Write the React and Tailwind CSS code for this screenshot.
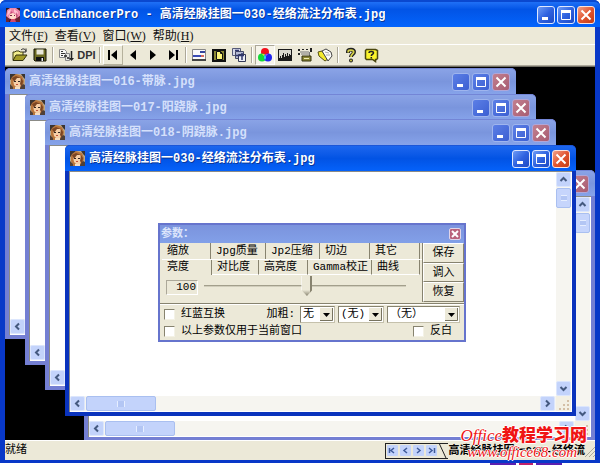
import { useState } from 'react';
import clsx from 'clsx';

const documents = [
  { title: '', place: 'left-[79px] top-[103px]' },
  { title: '高清经脉挂图一016-带脉.jpg', place: 'left-0 top-px' },
  { title: '高清经脉挂图一017-阳跷脉.jpg', place: 'left-[20px] top-[27px]' },
  { title: '高清经脉挂图一018-阴跷脉.jpg', place: 'left-[40px] top-[52px]' },
  { title: '高清经脉挂图一030-经络流注分布表.jpg', place: 'left-[60px] top-[78px]', active: true },
];

const menus = [
  ['文件', 'F'],
  ['查看', 'V'],
  ['窗口', 'W'],
  ['帮助', 'H'],
];

const upperTabs = [
  ['缩放', 'w-[49px]'],
  ['Jpg质量', 'w-[55px]'],
  ['Jp2压缩', 'w-[54px]'],
  ['切边', 'w-[50px]'],
  ['其它', 'w-[50px]'],
];

const lowerTabs = [
  ['亮度', 'w-[50px]'],
  ['对比度', 'w-[47px]'],
  ['高亮度', 'w-[49px]'],
  ['Gamma校正', 'w-[64px]'],
  ['曲线', 'w-[48px]'],
];

const arrowTurn = { up: '', right: 'rotate-90', down: 'rotate-180', left: '-rotate-90' };

function AppIcon() {
  return (
    <svg viewBox="0 0 14 14" className="h-3.5 w-3.5 shrink-0" aria-hidden="true">
      <rect width="14" height="14" fill="#2b1524" />
      <path d="M1 2l3-2h6l4 3v5l-3 3H3L0 8z" fill="#ee86a8" />
      <path d="M2 3l3-2-1 4-3 3zM8 1l4 3-1 3-3-3z" fill="#ffc0d0" />
      <path d="M5 3l2 2-3 2zM10 4l2 4-2 2z" fill="#c65079" />
      <path d="M4 6l3-1 3 2v3l-2 1H5L3 9z" fill="#ffdccb" />
      <path d="M4 7h2v1H4zM8 7h1v1H8z" fill="#7a1f45" />
      <path d="M0 9l4 2-1 3H0zM9 11l5-3v6H9z" fill="#6a2433" />
      <path d="M5 11h4l1 3H4z" fill="#d4486b" />
    </svg>
  );
}

function PortraitIcon() {
  return (
    <svg viewBox="0 0 15 15" className="h-[15px] w-[15px] shrink-0" aria-hidden="true">
      <rect width="15" height="15" fill="#b9a98c" />
      <path d="M0 0h6L3 4 0 6zM11 0h4v5l-2-2z" fill="#3a3431" />
      <path d="M2 3l4-3 6 2 2 5-1 5-3 3H3L1 10V5z" fill="#b9763c" />
      <path d="M3 6l3-3 4 1 2 4-2 5-3 1-3-3z" fill="#f6cfa6" />
      <path d="M2 4l4-2 5 2-4 0-3 4zM11 4l2 3-1 6-2-3z" fill="#7b4623" />
      <path d="M4 7h2v1H4zM8 7h2v1H8z" fill="#33251f" />
      <path d="M6 10h2v1H6z" fill="#c0523b" />
      <path d="M0 10l3 3v2H0zM10 14l3-4 2 1v4h-5z" fill="#4f4038" />
      <path d="M5 13h5v2H5z" fill="#f3dcc0" />
    </svg>
  );
}

function CaptionButtons({ active }) {
  const base = 'flex h-[18px] w-[18px] items-center justify-center rounded-[3px] border';
  const blue = active
    ? 'border-[#dfe8ff] bg-linear-to-br from-[#6f9bf5] via-[#2f62e0] to-[#1d49c4]'
    : 'border-[#9fb5ee] bg-linear-to-br from-[#5c7fe6] to-[#3c5fd2]';
  const red = active
    ? 'border-[#fbe3dc] bg-linear-to-br from-[#f0a088] via-[#e1552f] to-[#c43c13]'
    : 'border-[#b0a6d8] bg-linear-to-br from-[#c2808f] to-[#a85c72]';
  return (
    <div className="ml-auto flex shrink-0 gap-[2px]">
      <button type="button" aria-label="最小化" className={clsx(base, blue)}>
        <svg viewBox="0 0 16 16" className="h-4 w-4"><path d="M4 10h6v3H4z" fill="#fff" /></svg>
      </button>
      <button type="button" aria-label="最大化" className={clsx(base, blue)}>
        <svg viewBox="0 0 16 16" className="h-4 w-4">
          <path d="M3.500 4.500h9v8h-9z" fill="none" stroke="#fff" />
          <path d="M3 3h10v3H3z" fill="#fff" />
        </svg>
      </button>
      <button type="button" aria-label="关闭" className={clsx(base, red)}>
        <svg viewBox="0 0 16 16" className="h-4 w-4">
          <path d="M3.500 3.500l9 9M12.500 3.500l-9 9" stroke="#fff" strokeWidth="2" />
        </svg>
      </button>
    </div>
  );
}

function ScrollButton({ direction }) {
  return (
    <button
      type="button"
      aria-label={direction}
      className="flex h-[15px] w-[15px] shrink-0 items-center justify-center rounded-[2px] border border-[#dce6fd] bg-[#c3d3fb]"
    >
      <svg viewBox="0 0 9 9" className={clsx('h-[9px] w-[9px]', arrowTurn[direction])}>
        <path d="M1.500 6l3-3 3 3" fill="none" stroke="#44597f" strokeWidth="2" />
      </svg>
    </button>
  );
}

function SizeGrip() {
  return (
    <svg viewBox="0 0 15 15" className="h-[15px] w-[15px] shrink-0 bg-[#f3f0e4]" aria-hidden="true">
      <path d="M11 4h2v2h-2zM11 8h2v2h-2zM11 12h2v2h-2zM7 8h2v2H7zM7 12h2v2H7zM3 12h2v2H3z" fill="#d3bfa6" />
    </svg>
  );
}

function DocumentWindow({ title, place, active }) {
  return (
    <section
      className={clsx(
        'absolute flex h-[271px] w-[511px] flex-col rounded-t-[5px] border-x-4 border-b-4',
        place,
        active ? 'border-[#0a33bd] bg-[#0a33bd]' : 'border-[#747fd3] bg-[#747fd3]',
      )}
    >
      <header
        className={clsx(
          '-mx-1 flex h-[26px] shrink-0 items-center gap-1 rounded-t-[5px] border-t pr-[6px] pl-[5px]',
          active
            ? 'border-[#1b56d8] bg-linear-to-b from-[#1c66ee] via-[#0253e4] to-[#0562fa]'
            : 'border-[#7385d6] bg-linear-to-b from-[#8aa3e6] via-[#7a95dd] to-[#86a3ea]',
        )}
      >
        <PortraitIcon />
        <h2
          className={clsx(
            'truncate text-[12px] leading-4 font-bold',
            active ? 'text-white [text-shadow:1px_1px_#0a3698]' : 'text-[#d5e0fb]',
          )}
        >
          {title}
        </h2>
        <CaptionButtons active={active} />
      </header>
      <div className="flex min-h-0 flex-1 flex-col border-t border-l border-[#8b8b86] bg-white pr-px pb-px">
        <div className="flex min-h-0 flex-1">
          <div className="flex-1" />
          <div className="flex w-[15px] flex-col gap-px bg-[#f6f5f0]">
            <ScrollButton direction="up" />
            <div className="flex h-5 items-center justify-center rounded-[2px] border border-[#a9bff0] bg-[#c6d5fc]">
              <div className="h-1.5 w-1.5 border-y border-[#e6eeff] bg-[#b3c6f4]" />
            </div>
            <div className="flex-1" />
            <ScrollButton direction="down" />
          </div>
        </div>
        <div className="flex h-[15px] shrink-0 gap-px bg-[#f6f5f0]">
          <ScrollButton direction="left" />
          <div className="flex w-[70px] items-center justify-center rounded-[2px] border border-[#a9bff0] bg-[#c3d3fb]">
            <div className="h-1.5 w-2 border-x border-[#e6eeff] bg-[#b3c6f4]" />
          </div>
          <div className="flex-1" />
          <ScrollButton direction="right" />
          <SizeGrip />
        </div>
      </div>
    </section>
  );
}

function ToolButton({ label, raised, pressed, wide, children }) {
  return (
    <button
      type="button"
      aria-label={label}
      className={clsx(
        'flex h-5 items-center justify-center border',
        wide ? 'w-[21px]' : 'w-5',
        raised && 'border-t-white border-r-[#b5b19c] border-b-[#b5b19c] border-l-white',
        pressed && 'border-t-[#aca899] border-r-white border-b-white border-l-[#aca899] bg-[#f6f4ea]',
        !raised && !pressed && 'border-transparent',
      )}
    >
      {children}
    </button>
  );
}

function Glyph({ children }) {
  return (
    <svg viewBox="0 0 16 16" className="h-4 w-4 shrink-0" aria-hidden="true">
      {children}
    </svg>
  );
}

function Divider() {
  return <div className="mx-[2px] h-4 w-[2px] border-r border-l border-r-white border-l-[#aca899]" />;
}

function Toolbar() {
  return (
    <div role="toolbar" className="flex h-[22px] items-center border-t border-b border-t-white border-b-[#aca899] pl-[5px]">
      <ToolButton label="打开">
        <Glyph>
          <path d="M1 13V5h2l1-1h3l1 1h3v3" fill="#f3ee8d" stroke="#3c3a10" />
          <path d="M1 13.500l3-5.500h11l-4 5.500z" fill="#a39c28" stroke="#33310c" />
          <path d="M9 3c2-2 4-1 5 1M14 1.500V5h-3" fill="none" stroke="#222" />
        </Glyph>
      </ToolButton>
      <ToolButton label="保存文件">
        <Glyph>
          <path d="M2 2h12v12H3l-1-1z" fill="#6d6b22" stroke="#151505" />
          <path d="M4.500 2.500h7v5h-7z" fill="#e9e7da" />
          <path d="M4 10h8v4H4z" fill="#111" />
          <path d="M9.500 11h1.500v3H9.500z" fill="#eee" />
        </Glyph>
      </ToolButton>
      <Divider />
      <ToolButton label="批处理">
        <Glyph>
          <path d="M1.500 2.500h5l2 2v6h-7z" fill="#f8f8f5" stroke="#888" />
          <path d="M3 4.500h2M3 6.500h4M3 8.500h2" stroke="#333" />
          <path d="M7.500 6.500h4v7h-4z" fill="#e7e7e2" stroke="#888" />
          <path d="M13.500 4v9M6 9h3M9 11h2" fill="none" stroke="#222" strokeWidth="1.500" />
          <path d="M11 11h5l-2.500 3z" fill="#222" />
        </Glyph>
      </ToolButton>
      <ToolButton label="DPI" wide>
        <span className="font-['Liberation_Sans'] text-[11px] leading-none font-bold text-[#333]">DPI</span>
      </ToolButton>
      <Divider />
      <ToolButton label="第一页" raised>
        <Glyph><path d="M3 3h2v10H3zM12 3v10L6 8z" /></Glyph>
      </ToolButton>
      <ToolButton label="上一页">
        <Glyph><path d="M11 3v10L5 8z" /></Glyph>
      </ToolButton>
      <ToolButton label="下一页">
        <Glyph><path d="M5 3v10l6-5z" /></Glyph>
      </ToolButton>
      <ToolButton label="最后一页">
        <Glyph><path d="M4 3v10l6-5zM11 3h2v10h-2z" /></Glyph>
      </ToolButton>
      <Divider />
      <ToolButton label="参数窗口">
        <Glyph>
          <path d="M1.500 2.500h13v11h-13z" fill="#fafafa" stroke="#888" />
          <path d="M1 12h14v2H1zM13.500 3v10" fill="#444" />
          <path d="M9 4h5v2H9z" fill="#34449c" />
          <path d="M2 8h8v2H2z" fill="#3a4cb4" />
          <path d="M10 8h3v2h-3z" fill="#d66a5b" />
        </Glyph>
      </ToolButton>
      <ToolButton label="整页">
        <Glyph>
          <path d="M2 3h12v11H2z" fill="#8c8934" stroke="#111" strokeWidth="2" />
          <path d="M5.500 4.500h4l2 2v6h-6z" fill="#fdf67a" stroke="#111" />
          <path d="M9.500 4.500v2h2" fill="none" stroke="#111" />
        </Glyph>
      </ToolButton>
      <ToolButton label="层叠">
        <Glyph>
          <path d="M1.500 1.500h8v7h-8z" fill="#d6d9e8" stroke="#555a78" />
          <path d="M4.500 4.500h8v7h-8z" fill="#b3b8d2" stroke="#444966" />
          <path d="M7.500 7.500h7v7h-7z" fill="#eceef6" stroke="#333855" />
          <path d="M11 6v7M5 8.500h8M4 3.500h4" stroke="#2f376e" strokeWidth="1.500" />
        </Glyph>
      </ToolButton>
      <Divider />
      <ToolButton label="彩色" pressed>
        <Glyph>
          <circle cx="8" cy="5" r="4" fill="#f3101c" />
          <circle cx="5" cy="10.500" r="4" fill="#14d838" />
          <circle cx="11" cy="10.500" r="4" fill="#2025ee" />
          <path d="M8 7.500c1.300 1.500 1.300 4 0 5.500-1.300-1.500-1.300-4 0-5.500z" fill="#35e3ee" />
          <path d="M5 7l3 0.500-1.500 1.200z" fill="#ffe93a" />
          <path d="M11 7l-3 0.500 1.500 1.200z" fill="#f43bdc" />
        </Glyph>
      </ToolButton>
      <ToolButton label="直方图">
        <Glyph>
          <path d="M1 2h14v12H1z" fill="#1b1b1b" />
          <path d="M2 3h12v5h-1V7h-1v2h-1V6h-1v3H9V7H8v3H7V6H6v2H5v3H4V9H3v2H2z" fill="#d9d8cf" />
        </Glyph>
      </ToolButton>
      <ToolButton label="裁剪">
        <Glyph>
          <path d="M1 2h2v2H1zM5 2h2v1H5zM9 2h2v1H9zM13 1h2v4h-2zM1 6h2v2H1z" fill="#222" />
          <path d="M3 5h9M4 7h8M12.500 5v4" stroke="#777" />
          <path d="M5 9h9v5H5z" fill="#8a8734" stroke="#33310f" />
          <path d="M7 11.500h5" stroke="#f0edb0" />
        </Glyph>
      </ToolButton>
      <ToolButton label="擦除">
        <Glyph>
          <path d="M1 5l4-1 6 8-3 2-6-5z" fill="#f3ea2f" stroke="#55500f" />
          <path d="M5 4l4-2 5 3 1 4-4 5z" fill="#fdfdfa" stroke="#444" />
          <path d="M8 5l4 1M9 8l4 0" stroke="#aaa" />
        </Glyph>
      </ToolButton>
      <Divider />
      <ToolButton label="关于">
        <Glyph>
          <path d="M5 6V4.500C5 2 11 2 11 5c0 2.500-3 2-3 5" fill="none" stroke="#222" strokeWidth="4" />
          <path d="M5.200 5.500V4.500c0-2 5.500-2 5.500 0.500 0 2-2.700 2-2.700 5" fill="none" stroke="#d5d048" strokeWidth="1.800" />
          <circle cx="8" cy="13.500" r="2" fill="#222" />
          <circle cx="8" cy="13.500" r="0.900" fill="#dcd84a" />
        </Glyph>
      </ToolButton>
      <ToolButton label="帮助主题">
        <Glyph>
          <path d="M3.500 2.500h9l2 1v8l-1 1h-1v2l-3-2h-6l-1-1v-8z" fill="#fbf52b" stroke="#4a470f" strokeWidth="1.500" />
          <path d="M6 6c0-2 4.500-2 4.500 0C10.500 7.500 8.300 7 8.300 9M8.300 10v1.500" fill="none" stroke="#222" strokeWidth="1.500" />
        </Glyph>
      </ToolButton>
    </div>
  );
}

function TabRow({ tabs, selected, onSelect, ledge }) {
  return (
    <div className={clsx('flex h-4', ledge && 'border-t border-white')}>
      {tabs.map(([name, width]) => (
        <button
          key={name}
          type="button"
          role="tab"
          aria-selected={selected === name}
          onClick={() => onSelect(name)}
          className={clsx(
            'border-r border-[#87836f] pl-[5px] text-left leading-[15px] whitespace-nowrap',
            width,
            selected !== name && ledge && 'border-b border-b-white',
          )}
        >
          {name}
        </button>
      ))}
    </div>
  );
}

function Check({ label }) {
  return (
    <label className="flex items-center gap-[6px] whitespace-nowrap">
      <input
        type="checkbox"
        className="h-[11px] w-[11px] appearance-none border border-t-[#87836f] border-r-[#f4f2e6] border-b-[#f4f2e6] border-l-[#87836f] bg-white checked:bg-[#333]"
      />
      {label}
    </label>
  );
}

function Picker({ label, value, width }) {
  return (
    <div className={clsx('relative border border-t-[#87836f] border-r-[#c5c1ac] border-b-[#c5c1ac] border-l-[#87836f] bg-white', width)}>
      <select aria-label={label} defaultValue={value} className="block h-[15px] w-full appearance-none pl-[2px] leading-[15px] outline-none">
        <option>{value}</option>
      </select>
      <svg viewBox="0 0 13 13" className="pointer-events-none absolute top-px right-px h-[13px] w-[13px] bg-[#ece9d8]" aria-hidden="true">
        <path d="M12.500 0v12.500H0" fill="none" stroke="#77735f" />
        <path d="M3 5h7L6.500 9z" />
      </svg>
    </div>
  );
}

function ParameterPanel() {
  const [tab, setTab] = useState('亮度');
  const [level, setLevel] = useState(100);

  return (
    <section className="absolute top-[156px] left-[153px] w-[308px] border-2 border-[#6674cd] bg-[#ece9d8] text-[11px] text-black">
      <header className="flex h-[18px] items-center bg-linear-to-b from-[#7b93dd] to-[#82a0e8] pr-[3px] pl-px">
        <h2 className="font-bold text-[#dbe4fb]">参数：</h2>
        <button type="button" aria-label="关闭参数" className="ml-auto flex h-3 w-3 items-center justify-center rounded-[2px] border border-[#e0d5ea] bg-[#b9637c]">
          <svg viewBox="0 0 8 8" className="h-2 w-2"><path d="M1 1l6 6M7 1L1 7" stroke="#fff" strokeWidth="2" /></svg>
        </button>
      </header>
      <div className="flex border-b border-[#87836f] pb-px">
        <div className="flex-1 border-r border-[#87836f] pl-[2px]">
          <TabRow tabs={upperTabs} selected={tab} onSelect={setTab} />
          <TabRow tabs={lowerTabs} selected={tab} onSelect={setTab} ledge />
          <div className="flex h-[27px] items-start gap-[6px] pl-1">
            <output className="mt-[5px] w-8 border border-t-[#aca899] border-r-white border-b-white border-l-[#aca899] pr-px text-right leading-[13px]">{level}</output>
            <input
              type="range"
              aria-label="亮度"
              min="0"
              max="196"
              value={level}
              onChange={(e) => setLevel(Number(e.target.value))}
              className="h-[22px] w-[202px] appearance-none bg-transparent bg-linear-to-b from-transparent from-45% via-[#87836f] via-45% to-transparent to-55% [&::-webkit-slider-thumb]:h-[20px] [&::-webkit-slider-thumb]:w-[11px] [&::-webkit-slider-thumb]:appearance-none [&::-webkit-slider-thumb]:border-r-2 [&::-webkit-slider-thumb]:border-l [&::-webkit-slider-thumb]:border-r-[#87836f] [&::-webkit-slider-thumb]:border-l-white [&::-webkit-slider-thumb]:bg-linear-to-b [&::-webkit-slider-thumb]:from-[#ece9d8] [&::-webkit-slider-thumb]:from-70% [&::-webkit-slider-thumb]:to-[#87836f] [&::-webkit-slider-thumb]:[clip-path:polygon(0_0,100%_0,100%_70%,50%_100%,0_70%)]"
            />
          </div>
        </div>
        <div className="flex w-[41px] flex-col">
          {['保存', '调入', '恢复'].map((name) => (
            <button key={name} type="button" className="flex-1 border border-t-white border-r-[#87836f] border-b-[#87836f] border-l-white leading-4">
              {name}
            </button>
          ))}
        </div>
      </div>
      <div className="border-t border-white px-1 pt-px pb-px">
        <div className="flex h-[17px] items-center gap-[3px]">
          <Check label="红蓝互换" />
          <span className="ml-auto pr-[2px]">加粗:</span>
          <Picker label="加粗" value="无" width="w-[35px]" />
          <Picker label="加粗方式" value="(无)" width="w-[46px]" />
          <Picker label="加粗范围" value="（无）" width="w-[73px]" />
        </div>
        <div className="flex h-4 items-center justify-between pr-2">
          <Check label="以上参数仅用于当前窗口" />
          <Check label="反白" />
        </div>
      </div>
    </section>
  );
}

function StatusBar() {
  return (
    <footer className="relative flex h-[20px] shrink-0 items-center border-t border-white bg-[#ece9d8] text-black">
      <span className="text-[11px]">就绪</span>
      <div className="ml-auto flex h-4 items-center border-t border-b border-l border-[#222]">
        {['M6 2L3 4.500 6 7M1.500 2v5', 'M6 2L3 4.500 6 7', 'M3 2l3 2.500L3 7', 'M2 2l3 2.500L2 7M7.500 2v5'].map((d) => (
          <button key={d} type="button" aria-label="翻页" className="flex h-[13px] w-[13px] items-center justify-center rounded-[2px] border border-[#ece9d8] bg-[#c3d3fb]">
            <svg viewBox="0 0 9 9" className="h-[9px] w-[9px]"><path d={d} fill="none" stroke="#3f5b9a" strokeWidth="1.500" /></svg>
          </button>
        ))}
        <svg viewBox="0 0 10 16" className="h-4 w-2.5"><path d="M1 0l7 15" fill="none" stroke="#222" /></svg>
      </div>
      <span className="pl-px text-[11px] leading-4 font-bold whitespace-nowrap">高清经脉挂图一030-经络流</span>
      <svg viewBox="0 0 10 14" className="h-3.5 w-2.5 shrink-0" aria-hidden="true">
        <path d="M0 13L10 3M4 13l6-6M8 13l2-2" stroke="#aca899" />
      </svg>
      <a
        href="#office68"
        className="absolute right-[8px] bottom-0 flex flex-col items-end font-['Liberation_Serif','Noto_Sans_CJK_SC',serif] text-[#f01414] [text-shadow:1px_0_white,-1px_0_white,0_1px_white,0_-1px_white]"
      >
        <span className="flex items-center text-[17px] leading-4 whitespace-nowrap">
          <i className="text-[17px]">Office</i>
          <b className="font-black">教程学习网</b>
        </span>
        <i className="pr-[10px] text-[15px] leading-4">www.office68.com</i>
      </a>
    </footer>
  );
}

export default function App() {
  return (
    <div className="flex h-screen flex-col overflow-hidden bg-white font-['Liberation_Mono','Noto_Sans_CJK_SC',monospace]">
      <div className="flex min-h-0 flex-1 flex-col rounded-t-[6px] border-r-[5px] border-b-[3px] border-l-[5px] border-[#0838c8] bg-[#0838c8]">
        <header className="-mx-[5px] flex h-[27px] shrink-0 items-center gap-[3px] rounded-t-[6px] border-t-2 border-[#0a48cf] bg-linear-to-b from-[#1f70f6] via-[#0254e6] via-30% to-[#0464fc] pr-[5px] pl-[6px]">
          <AppIcon />
          <h1 className="truncate text-[12px] leading-4 font-bold text-white [text-shadow:1px_1px_#0a3698]">
            ComicEnhancerPro - 高清经脉挂图一030-经络流注分布表.jpg
          </h1>
          <CaptionButtons active />
        </header>
        <div className="shrink-0 bg-[#ece9d8]">
          <nav className="flex h-[17px] items-center gap-[7px] pl-1 font-['Liberation_Serif','Noto_Sans_CJK_SC',serif] text-[12px] leading-4 text-[#111]">
            {menus.map(([name, key]) => (
              <button key={key} type="button" className="whitespace-nowrap">
                {name}(<u>{key}</u>)
              </button>
            ))}
          </nav>
          <Toolbar />
        </div>
        <main className="relative min-h-0 flex-1 overflow-hidden border-t border-[#716f64] bg-black">
          {documents.map((doc) => (
            <DocumentWindow key={doc.place} {...doc} />
          ))}
          <ParameterPanel />
        </main>
        <StatusBar />
      </div>
      <div className="flex h-[2px] shrink-0 justify-end gap-[3px] pr-[38px]">
        <div className="w-[26px] bg-[#5a1fb0]" />
        <div className="w-[14px] bg-[#c0206c]" />
        <div className="w-[26px] bg-[#5a1fb0]" />
      </div>
    </div>
  );
}
